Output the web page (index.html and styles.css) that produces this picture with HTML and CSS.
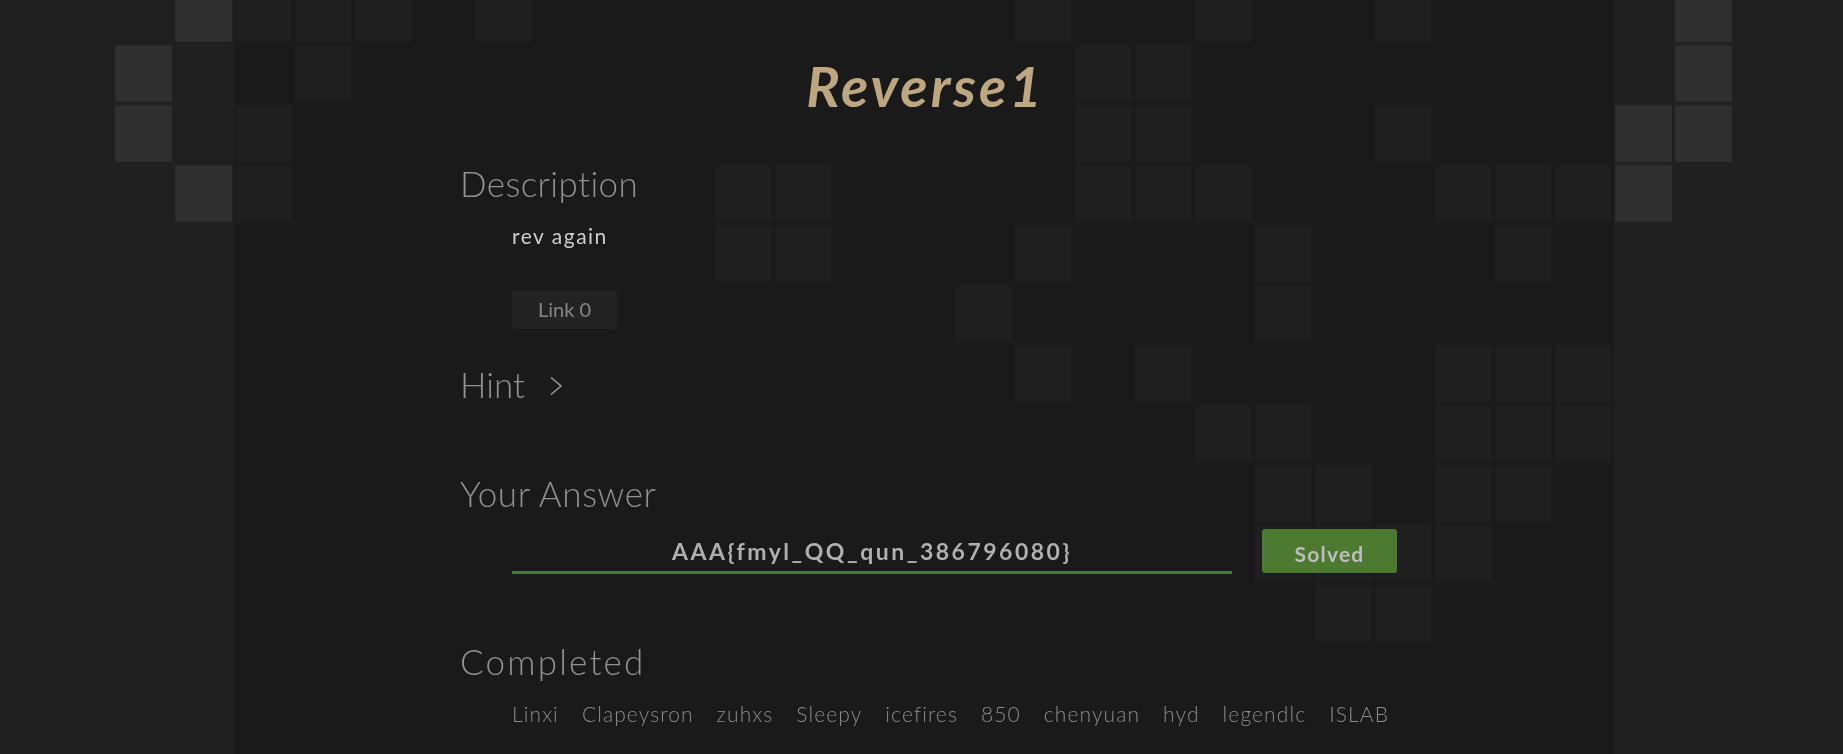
FILE: index.html
```html
<!DOCTYPE html>
<html lang="en">
<head>
<meta charset="utf-8">
<title>Reverse1</title>
<link rel="stylesheet" href="styles.css">
</head>
<body>
<div class="pixels" aria-hidden="true">
  <i class="c3 r0"></i><i class="c2 r1"></i><i class="c2 r2"></i><i class="c3 r3"></i>
  <i class="c28 r0"></i><i class="c28 r1"></i><i class="c27 r2"></i><i class="c28 r2"></i><i class="c27 r3"></i>
  <i class="c4 r0"></i><i class="c5 r0"></i><i class="c6 r0"></i><i class="c8 r0"></i><i class="c17 r0"></i><i class="c20 r0"></i><i class="c23 r0"></i>
  <i class="c5 r1"></i><i class="c18 r1"></i><i class="c19 r1"></i>
  <i class="c4 r2"></i><i class="c18 r2"></i><i class="c19 r2"></i><i class="c23 r2"></i>
  <i class="c4 r3"></i><i class="c12 r3"></i><i class="c13 r3"></i><i class="c18 r3"></i><i class="c19 r3"></i><i class="c20 r3"></i><i class="c24 r3"></i><i class="c25 r3"></i><i class="c26 r3"></i>
  <i class="c12 r4"></i><i class="c13 r4"></i><i class="c17 r4"></i><i class="c21 r4"></i><i class="c25 r4"></i>
  <i class="c16 r5"></i><i class="c21 r5"></i>
  <i class="c17 r6"></i><i class="c19 r6"></i><i class="c24 r6"></i><i class="c25 r6"></i><i class="c26 r6"></i>
  <i class="c20 r7"></i><i class="c21 r7"></i><i class="c24 r7"></i><i class="c25 r7"></i><i class="c26 r7"></i>
  <i class="c21 r8"></i><i class="c22 r8"></i><i class="c24 r8"></i><i class="c25 r8"></i>
  <i class="c21 r9"></i><i class="c22 r9"></i><i class="c23 r9"></i><i class="c24 r9"></i>
  <i class="c22 r10"></i><i class="c23 r10"></i>
</div>

<main class="panel">
  <h1 class="title">Reverse1</h1>

  <section class="section">
    <h2 class="heading heading-desc">Description</h2>
    <div class="body">
      <p class="desc">rev again</p>
      <a class="link-btn" href="#">Link 0</a>
    </div>
  </section>

  <section class="section">
    <h2 class="heading heading-hint">Hint
      <svg class="chevron" width="14" height="20" viewBox="0 0 14 20"><polyline points="2,1.5 12,10 2,18.5" fill="none" stroke="#9a9a9a" stroke-width="1.6"/></svg>
    </h2>
  </section>

  <section class="section">
    <h2 class="heading heading-answer">Your Answer</h2>
    <div class="body answer-row">
      <div class="answer-field">AAA{fmyl_QQ_qun_386796080}</div>
      <button class="solved" type="button">Solved</button>
    </div>
  </section>

  <section class="section">
    <h2 class="heading heading-done">Completed</h2>
    <ul class="body names">
      <li>Linxi</li><li>Clapeysron</li><li>zuhxs</li><li>Sleepy</li><li>icefires</li><li>850</li><li>chenyuan</li><li>hyd</li><li>legendlc</li><li>ISLAB</li>
    </ul>
  </section>
</main>
</body>
</html>
```

FILE: styles.css
```css
html, body {
  margin: 0;
  padding: 0;
}
body {
  background: #202020;
  font-family: Lato, "Open Sans", sans-serif;
  color: #909090;
  height: 754px;
  overflow: hidden;
}

/* decorative pixel grid behind the panel */
.pixels {
  position: fixed;
  left: -5px;
  top: -15px;
  z-index: -1;
  display: grid;
  grid-template-columns: repeat(31, 57px);
  grid-auto-rows: 57px;
  gap: 3px;
}
.pixels i {
  display: block;
  background: #303030;
  box-shadow: inset 0 0 0 1px #2b2b2b;
}
.c2 { grid-column: 3; } .c3 { grid-column: 4; } .c4 { grid-column: 5; } .c5 { grid-column: 6; }
.c6 { grid-column: 7; } .c8 { grid-column: 9; } .c12 { grid-column: 13; } .c13 { grid-column: 14; }
.c16 { grid-column: 17; } .c17 { grid-column: 18; } .c18 { grid-column: 19; } .c19 { grid-column: 20; }
.c20 { grid-column: 21; } .c21 { grid-column: 22; } .c22 { grid-column: 23; } .c23 { grid-column: 24; }
.c24 { grid-column: 25; } .c25 { grid-column: 26; } .c26 { grid-column: 27; } .c27 { grid-column: 28; }
.c28 { grid-column: 29; }
.r0 { grid-row: 1; } .r1 { grid-row: 2; } .r2 { grid-row: 3; } .r3 { grid-row: 4; }
.r4 { grid-row: 5; } .r5 { grid-row: 6; } .r6 { grid-row: 7; } .r7 { grid-row: 8; }
.r8 { grid-row: 9; } .r9 { grid-row: 10; } .r10 { grid-row: 11; }

.panel {
  width: 1380px;
  margin-left: 234px;
  height: 754px;
  box-sizing: border-box;
  background: rgba(23, 23, 23, 0.69);
  padding: 54px 0 0 226px;
}

.title {
  margin: 0 0 0 -226px;
  padding-left: 3px;
  text-align: center;
  font-size: 56px;
  line-height: 64px;
  font-weight: 700;
  font-style: italic;
  letter-spacing: 3px;
  color: #bca781;
}

.section { margin: 0; }

.heading {
  margin: 44px 0 0;
  font-size: 35px;
  line-height: 40px;
  font-weight: 300;
  letter-spacing: 0.4px;
  color: #929292;
  display: flex;
  align-items: center;
}
.heading-desc { margin-top: 45px; }
.heading-hint { margin-top: 35px; gap: 24px; letter-spacing: 0; }
.heading-answer { margin-top: 69px; letter-spacing: 0.6px; }
.heading-done { margin-top: 67px; letter-spacing: 2.2px; }
.chevron { display: block; margin-top: 3px; }

.body {
  padding-left: 52px;
}

.desc {
  margin: 21px 0 0;
  font-size: 21px;
  line-height: 24px;
  letter-spacing: 1.5px;
  color: #cfcfcf;
}

.link-btn {
  display: block;
  width: 105px;
  height: 39px;
  margin-top: 42px;
  background: #232323;
  border-radius: 2px;
  color: #858585;
  text-decoration: none;
  text-align: center;
  font-size: 20px;
  line-height: 39px;
}

.answer-row {
  display: flex;
  align-items: flex-end;
  gap: 30px;
  margin-top: 16px;
}
.answer-field {
  width: 720px;
  height: 45px;
  box-sizing: border-box;
  padding-top: 3px;
  border-bottom: 3px solid #4a7a2e;
  text-align: center;
  font-size: 23px;
  line-height: 39px;
  font-weight: 700;
  letter-spacing: 2.5px;
  color: #b0b0b0;
}
.solved {
  width: 135px;
  height: 44px;
  margin-bottom: 1px;
  padding: 5px 0 0;
  border: none;
  border-radius: 3px;
  background: #4b7a30;
  color: #bdbdbd;
  font-family: inherit;
  font-size: 21px;
  line-height: 39px;
  font-weight: 700;
  letter-spacing: 1.2px;
}

.names {
  list-style: none;
  margin: 21px 0 0;
  display: flex;
  gap: 23px;
  font-size: 21px;
  line-height: 24px;
  font-weight: 300;
  letter-spacing: 1.1px;
  color: #8c8c8c;
}
.names li { margin: 0; }
```
